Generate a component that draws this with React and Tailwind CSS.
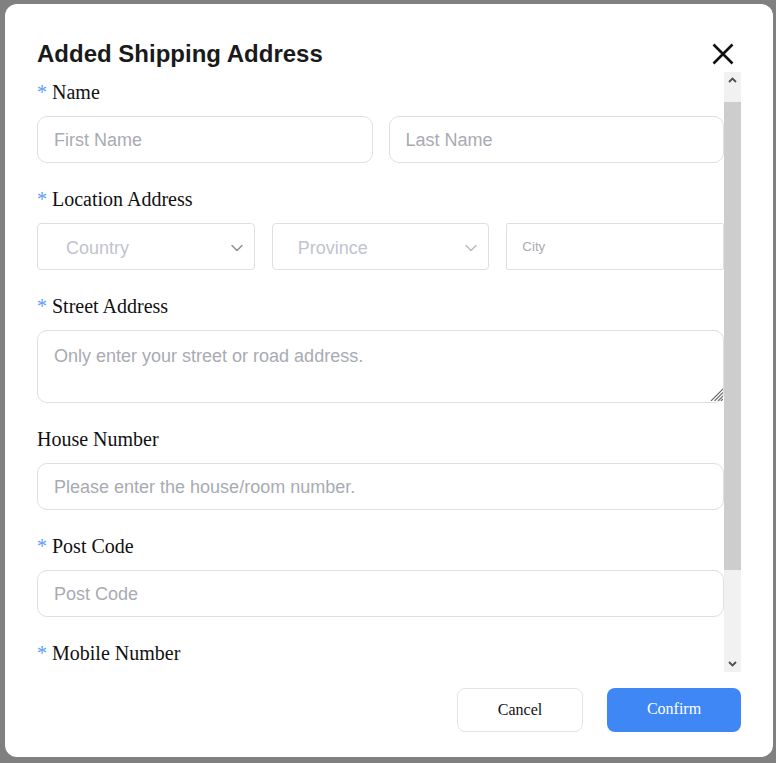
import { useState } from "react";

const sans = "font-['Liberation_Sans',Arial,sans-serif]";
const serif = "font-['Liberation_Serif','Times_New_Roman',serif]";

const Label = ({ required, children }) => (
  <div className={`${serif} h-[24px] leading-[24px] text-[20px] text-[#111] mb-[12px] whitespace-pre`}>
    {required && <span className="text-[#5c9df5]">* </span>}
    {children}
  </div>
);

const TextInput = ({ placeholder }) => (
  <input
    type="text"
    placeholder={placeholder}
    className={`${sans} w-full h-[47px] rounded-[10px] border border-[#dcdfe6] bg-white px-[16px] pt-[2px] text-[18px] text-[#333] placeholder:text-[#a8abb2] outline-none`}
  />
);

const Chevron = ({ color }) => (
  <svg width="12" height="8" viewBox="0 0 12 8" fill="none">
    <path d="M1 1.5l5 5 5-5" stroke={color} strokeWidth="1.5" strokeLinecap="round" strokeLinejoin="round" />
  </svg>
);

const FakeSelect = ({ text, pad, chevron }) => (
  <div
    className={`${sans} h-[47px] rounded-[4px] border border-[#dcdfe6] bg-white flex items-center justify-between pr-[11px] pt-[3px] text-[18px] text-[#c0c4cc] ${pad}`}
  >
    <span>{text}</span>
    <Chevron color={chevron} />
  </div>
);

const Section = ({ label, required, children }) => (
  <div className="mb-[24px]">
    <Label required={required}>{label}</Label>
    {children}
  </div>
);

const ScrollBar = () => (
  <div className="w-[17px] bg-[#f1f1f1] flex flex-col">
    <div className="h-[30px] flex justify-center pt-[5px]">
      <svg width="9" height="6" viewBox="0 0 9 6" fill="none">
        <path d="M1 5l3.5-3.5L8 5" stroke="#505050" strokeWidth="1.8" />
      </svg>
    </div>
    <div className="h-[468px] bg-[#cdcdcd]" />
    <div className="flex-1 flex flex-col justify-end items-center pb-[5px]">
      <svg width="9" height="6" viewBox="0 0 9 6" fill="none">
        <path d="M1 1l3.5 3.5L8 1" stroke="#505050" strokeWidth="1.8" />
      </svg>
    </div>
  </div>
);

const App = () => {
  const [open] = useState(true);
  if (!open) return null;
  return (
    <div className="min-h-[763px] bg-[#808080] pt-[4px] pl-[5px]">
      <div className="w-[768px] h-[753px] bg-white rounded-[12px] pt-[34px] px-[32px] pb-[25px] flex flex-col">
        <div className="h-[32px] flex items-center justify-between">
          <h2 className={`${sans} text-[24px] leading-[32px] font-bold text-[#1a1a1a]`}>
            Added Shipping Address
          </h2>
          <button className="mr-[7px]" aria-label="close">
            <svg width="22" height="22" viewBox="0 0 22 22" fill="none">
              <path d="M1.5 1.5l19 19M20.5 1.5l-19 19" stroke="#111" strokeWidth="2.6" />
            </svg>
          </button>
        </div>

        <div className="mt-[2px] h-[600px] flex">
          <div className="flex-1 overflow-hidden pt-[8px]">
            <Section label="Name" required>
              <div className="grid grid-cols-2 gap-[16px]">
                <TextInput placeholder="First Name" />
                <TextInput placeholder="Last Name" />
              </div>
            </Section>

            <Section label="Location Address" required>
              <div className="grid grid-cols-3 gap-[17px]">
                <FakeSelect text="Country" pad="pl-[28px]" chevron="#8d9099" />
                <FakeSelect text="Province" pad="pl-[25px]" chevron="#b9bcc3" />
                <div className={`${sans} h-[47px] rounded-[2px] border border-[#dcdfe6] flex items-center pl-[15px] pt-[1px] text-[13.33px] text-[#a8abb2]`}>
                  City
                </div>
              </div>
            </Section>

            <Section label="Street Address" required>
              <div className="relative">
                <textarea
                  placeholder="Only enter your street or road address."
                  className={`${sans} block w-full h-[73px] resize-none rounded-[10px] border border-[#dcdfe6] px-[16px] pt-[15px] text-[18px] leading-[21px] placeholder:text-[#a8abb2] outline-none`}
                />
                <svg className="absolute right-[1px] bottom-[2px]" width="14" height="14" viewBox="0 0 14 14">
                  <path d="M14 2L2 14M14 5.5L5.5 14M14 9L9 14M14 12L12 14" stroke="#6f6f6f" strokeWidth="1.2" />
                </svg>
              </div>
            </Section>

            <Section label="House Number">
              <TextInput placeholder="Please enter the house/room number." />
            </Section>

            <Section label="Post Code" required>
              <TextInput placeholder="Post Code" />
            </Section>

            <Section label="Mobile Number" required>
              <TextInput placeholder="Mobile Number" />
            </Section>
          </div>
          <ScrollBar />
        </div>

        <div className="mt-[16px] flex justify-end gap-[24px]">
          <button className={`${serif} w-[126px] h-[44px] rounded-[8px] border border-[#e4e4e7] bg-white text-[16px] text-[#111]`}>
            Cancel
          </button>
          <button className={`${serif} w-[134px] h-[44px] rounded-[8px] bg-[#3f87f5] text-[16px] text-white pb-[2px]`}>
            Confirm
          </button>
        </div>
      </div>
    </div>
  );
};

export default App;
